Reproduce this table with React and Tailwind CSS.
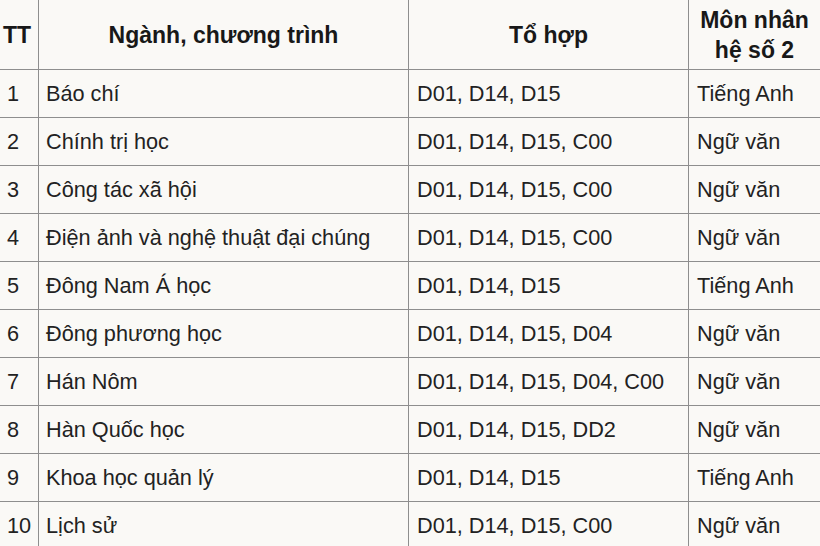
const rows = [
    ['1', 'Báo chí', 'D01, D14, D15', 'Tiếng Anh'],
    ['2', 'Chính trị học', 'D01, D14, D15, C00', 'Ngữ văn'],
    ['3', 'Công tác xã hội', 'D01, D14, D15, C00', 'Ngữ văn'],
    ['4', 'Điện ảnh và nghệ thuật đại chúng', 'D01, D14, D15, C00', 'Ngữ văn'],
    ['5', 'Đông Nam Á học', 'D01, D14, D15', 'Tiếng Anh'],
    ['6', 'Đông phương học', 'D01, D14, D15, D04', 'Ngữ văn'],
    ['7', 'Hán Nôm', 'D01, D14, D15, D04, C00', 'Ngữ văn'],
    ['8', 'Hàn Quốc học', 'D01, D14, D15, DD2', 'Ngữ văn'],
    ['9', 'Khoa học quản lý', 'D01, D14, D15', 'Tiếng Anh'],
    ['10', 'Lịch sử', 'D01, D14, D15, C00', 'Ngữ văn'],
]

const line = 'border-[#8e8e8e]'
const head = 'font-bold text-[23px] text-[#181818]'

export default function App() {
    return (
        <div className="h-[546px] w-[820px] overflow-hidden bg-[#faf9f6] font-['Liberation_Sans',Arial,sans-serif] text-[21.7px] leading-[30px] text-[#222]">
            <div className="grid grid-cols-[39px_370px_280px_131px]">
                {/* ── Header ── */}
                <div className={`flex h-[70px] items-center border-r border-b ${line} pl-[3px] ${head}`}>TT</div>
                <div className={`flex h-[70px] items-center justify-center border-r border-b ${line} ${head}`}>Ngành, chương trình</div>
                <div className={`flex h-[70px] items-center justify-center border-r border-b ${line} ${head}`}>Tổ hợp</div>
                <div className={`flex h-[70px] flex-col items-center justify-center border-b ${line} ${head}`}>
                    <span>Môn nhân</span>
                    <span>hệ số 2</span>
                </div>

                {/* ── Rows ── */}
                {rows.map(([tt, name, combo, subject]) => (
                    <div key={tt} className="contents">
                        <div className={`flex h-[48px] items-center border-r border-b ${line} pl-[7px]`}>{tt}</div>
                        <div className={`flex h-[48px] items-center border-r border-b ${line} pl-[7px]`}>{name}</div>
                        <div className={`flex h-[48px] items-center border-r border-b ${line} pl-[8px]`}>{combo}</div>
                        <div className={`flex h-[48px] items-center border-b ${line} pl-[8px]`}>{subject}</div>
                    </div>
                ))}
            </div>
        </div>
    )
}
